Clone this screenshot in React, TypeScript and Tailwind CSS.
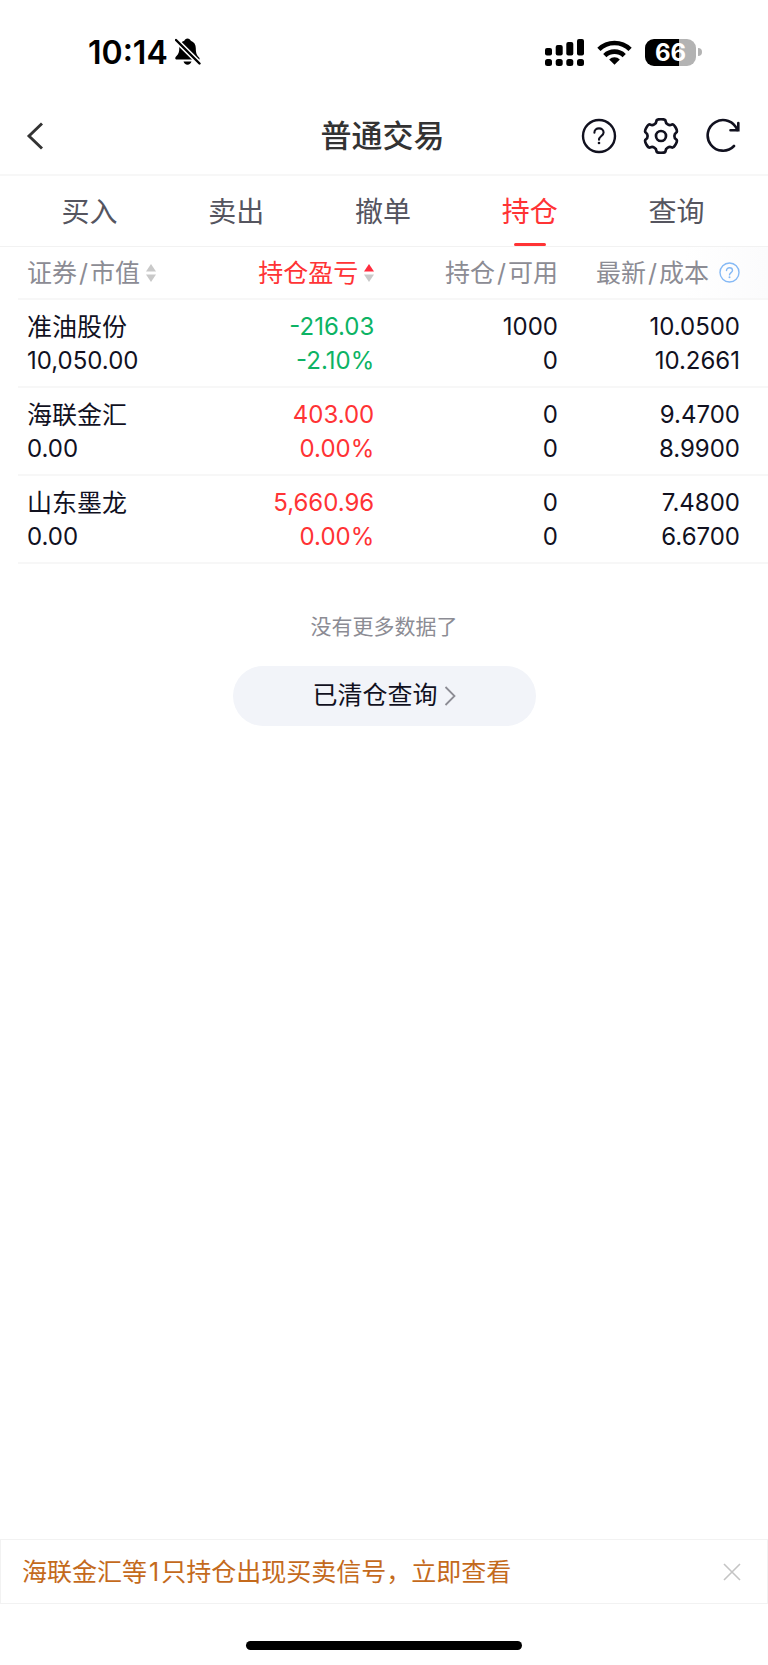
import { useState } from "react";

type Holding = {
  name: string;
  marketValue: string;
  profit: string;
  profitRate: string;
  amount: string;
  available: string;
  price: string;
  cost: string;
};

const tabs = ["买入", "卖出", "撤单", "持仓", "查询"];

const holdings: Holding[] = [
  { name: "准油股份", marketValue: "10,050.00", profit: "-216.03", profitRate: "-2.10%", amount: "1000", available: "0", price: "10.0500", cost: "10.2661" },
  { name: "海联金汇", marketValue: "0.00", profit: "403.00", profitRate: "0.00%", amount: "0", available: "0", price: "9.4700", cost: "8.9900" },
  { name: "山东墨龙", marketValue: "0.00", profit: "5,660.96", profitRate: "0.00%", amount: "0", available: "0", price: "7.4800", cost: "6.6700" },
];

// six rounded teeth, corners smoothed by running quadratics through the midpoints
function buildGearPath(cx: number, cy: number) {
  const corners: number[][] = [];
  for (let tooth = 0; tooth < 6; tooth++) {
    for (const [offset, radius] of [[-15, 17.5], [15, 17.5], [20, 13.6], [40, 13.6]]) {
      const angle = ((tooth * 60 + offset) * Math.PI) / 180;
      corners.push([cx + radius * Math.sin(angle), cy - radius * Math.cos(angle)]);
    }
  }
  const mid = (a: number[], b: number[]) => `${((a[0] + b[0]) / 2).toFixed(2)} ${((a[1] + b[1]) / 2).toFixed(2)}`;
  const start = `M${mid(corners[corners.length - 1], corners[0])}`;
  return corners.reduce((path, corner, i) => {
    const next = corners[(i + 1) % corners.length];
    return `${path}Q${corner[0].toFixed(2)} ${corner[1].toFixed(2)} ${mid(corner, next)}`;
  }, start) + "Z";
}

const gearPath = buildGearPath(18, 18);

function StatusBar() {
  return (
    <div className="flex h-24 items-center justify-between pt-2 pr-[66px] pl-[88px] text-black">
      <div className="flex items-center gap-[7px]">
        <span className="pt-0.5 text-[32px] leading-8 font-semibold">10:14</span>
        <svg width="26" height="28" viewBox="0 0 26 28" fill="currentColor">
          <path d="M12.5 0.5c1.6 0 2.9 1 3.3 2.3 3.3 1.1 5 4 5 7.5 0 5 1 7 3 9 .8.9.9 1.4.9 2.2H1.2c-.7 0-.9-.7-.9-1.2 0-1 .6-1.6 1.2-2.2 2-2 2.8-4 2.8-8 0-3.5 1.7-6.3 5-7.3C9.700 1.500 10.900.5 12.500.5z" />
          <path d="M8.5 23.5h8c-.5 1.9-2.1 3.2-4 3.2s-3.5-1.3-4-3.2z" />
          <path d="M0 1L26 27" stroke="#fff" strokeWidth="5.2" />
          <path d="M1 2L24.5 25.5" stroke="currentColor" strokeWidth="2.4" strokeLinecap="round" />
        </svg>
      </div>
      <div className="flex items-center gap-[13px]">
        <svg width="39" height="27" viewBox="0 0 39 27" fill="currentColor">
          <rect x="0" y="9" width="7" height="7.5" rx="2" />
          <rect x="10.7" y="6" width="7" height="10.5" rx="2" />
          <rect x="21.3" y="3" width="7" height="13.5" rx="2" />
          <rect x="32" y="0" width="7" height="16.5" rx="2" />
          <rect x="0" y="20" width="7" height="7" rx="2.5" />
          <rect x="10.7" y="20" width="7" height="7" rx="2.5" />
          <rect x="21.3" y="20" width="7" height="7" rx="2.5" />
          <rect x="32" y="20" width="7" height="7" rx="2.5" />
        </svg>
        <svg width="35" height="25" viewBox="0 0 35 25" fill="none" stroke="currentColor" strokeWidth="4.6">
          <path d="M1.9 9.4a22.3 22.3 0 0 1 31.2 0" />
          <path d="M7.8 15.6a13.8 13.8 0 0 1 19.4 0" />
          <path d="M17.5 24.8l-5.3-5.3a7.5 7.5 0 0 1 10.6 0z" fill="currentColor" stroke="none" />
        </svg>
        <div className="flex items-center gap-0.5">
          <div className="flex h-[27px] w-[51px] items-center justify-center rounded-[9px] bg-linear-to-r from-black from-66% to-[#b3b3b3] to-66% pt-0.5 text-2xl leading-none font-bold text-white">
            66
          </div>
          <div className="h-2 w-1 rounded-r-full bg-[#b3b3b3]" />
        </div>
      </div>
    </div>
  );
}

function Header() {
  return (
    <header className="grid h-20 grid-cols-[1fr_auto_1fr] items-center border-b-2 border-[#f7f7f7] pt-0.5 pr-[27px] pl-6">
      <button type="button" aria-label="返回" className="justify-self-start">
        <svg width="22" height="32" viewBox="0 0 22 32" fill="none" stroke="#333" strokeWidth="2.9">
          <path d="M18 3.5L5 16l13 12.5" />
        </svg>
      </button>
      <h1 className="text-[31px] leading-10 font-medium text-[#333]">普通交易</h1>
      <div className="flex gap-[26px] justify-self-end text-[#11111f]">
        <button type="button" aria-label="帮助">
          <svg width="36" height="36" viewBox="0 0 36 36" fill="none" stroke="currentColor" strokeWidth="2.4" strokeLinecap="round">
            <circle cx="18" cy="18" r="16" />
            <path d="M13.4 14.7c0-2.6 2-4.3 4.6-4.3s4.6 1.7 4.6 4.1c0 3.2-4.6 3.8-4.6 7.2" strokeWidth="2.1" />
            <circle cx="18" cy="25" r="1.3" fill="currentColor" stroke="none" />
          </svg>
        </button>
        <button type="button" aria-label="设置">
          <svg width="36" height="36" viewBox="0 0 36 36" fill="none" stroke="currentColor" strokeWidth="2.7">
            <path d={gearPath} />
            <circle cx="18" cy="18" r="5" />
          </svg>
        </button>
        <button type="button" aria-label="刷新">
          <svg width="36" height="36" viewBox="0 0 36 36" fill="none" stroke="currentColor" strokeWidth="2.6" strokeLinecap="round">
            <path d="M32.3 12A15.3 15.3 0 1 0 29 28" />
            <path d="M33.3 5v7.3H25.5" />
          </svg>
        </button>
      </div>
    </header>
  );
}

function SortArrows({ active }: { active?: boolean }) {
  return (
    <svg width="10" height="18" viewBox="0 0 10 18">
      <path d="M5 0l5 7.5H0z" fill={active ? "#ff2d3f" : "#c9c9c9"} />
      <path d="M5 18l5-7.5H0z" fill="#c9c9c9" />
    </svg>
  );
}

function Slash() {
  return <span className="mx-0.5">/</span>;
}

function HoldingsTable() {
  return (
    <div className="pl-[18px]">
      <table className="w-full table-fixed border-collapse text-right text-2xl leading-[34px] text-[#11111f]">
        <colgroup>
          <col className="w-[23%]" />
          <col className="w-[24.5%]" />
          <col className="w-[24.5%]" />
          <col className="w-[28%]" />
        </colgroup>
        <thead>
          <tr className="h-[52px] border-b-2 border-[#f7f7f7] text-[25px] text-[#8c8c94]">
            <th className="p-0 pl-[9px] text-left font-normal">
              <button type="button" className="flex items-center gap-1.5 whitespace-nowrap">
                <span>证券<Slash />市值</span>
                <SortArrows />
              </button>
            </th>
            <th className="p-0 font-normal">
              <button type="button" className="ml-auto flex items-center gap-1.5 whitespace-nowrap text-[#ff3335]">
                持仓盈亏
                <SortArrows active />
              </button>
            </th>
            <th className="p-0 font-normal whitespace-nowrap">持仓<Slash />可用</th>
            <th className="bg-linear-to-r from-white from-60% to-[#fbfbfc] p-0 pr-7 font-normal">
              <div className="flex items-center justify-end gap-2.5 whitespace-nowrap">
                <span>最新<Slash />成本</span>
                <button type="button" aria-label="成本说明">
                  <svg width="21" height="21" viewBox="0 0 21 21" fill="none" stroke="#85b9f5" strokeWidth="1.4" strokeLinecap="round">
                    <circle cx="10.5" cy="10.5" r="9.5" />
                    <path d="M7.5 8.6c0-1.7 1.3-2.9 3-2.9s3 1.1 3 2.7c0 2-3 2.4-3 4.5" />
                    <circle cx="10.5" cy="15.2" r="1" fill="#85b9f5" stroke="none" />
                  </svg>
                </button>
              </div>
            </th>
          </tr>
        </thead>
        <tbody>
          {holdings.map((item) => (
            <tr key={item.name} className="h-[88px] border-b-2 border-[#f7f7f7]">
              <td className="p-0 pt-0.5 pl-[9px] text-left">
                <div className="text-[25px]">{item.name}</div>
                <div>{item.marketValue}</div>
              </td>
              <td className={item.profit.startsWith("-") ? "p-0 pt-0.5 text-[#0cb364]" : "p-0 pt-0.5 text-[#ff3335]"}>
                <div>{item.profit}</div>
                <div>{item.profitRate}</div>
              </td>
              <td className="p-0 pt-0.5">
                <div>{item.amount}</div>
                <div>{item.available}</div>
              </td>
              <td className="p-0 pt-0.5 pr-7">
                <div>{item.price}</div>
                <div>{item.cost}</div>
              </td>
            </tr>
          ))}
        </tbody>
      </table>
    </div>
  );
}

export default function App() {
  const [activeTab, setActiveTab] = useState("持仓");
  const [showSignal, setShowSignal] = useState(true);

  return (
    <div className="flex min-h-screen flex-col bg-white font-['Inter','Noto_Sans_CJK_SC',sans-serif]">
      <StatusBar />
      <Header />
      <nav className="flex h-[71px] border-b border-[#f2f2f2] pr-[18px] pl-4">
        {tabs.map((tab) => (
          <button
            key={tab}
            type="button"
            onClick={() => setActiveTab(tab)}
            className={`relative flex-1 pt-0.5 text-[28px] ${tab === activeTab ? "text-[#ff3335]" : "text-[#55555f]"}`}
          >
            {tab}
            {tab === activeTab && <span className="absolute inset-x-0 bottom-0 mx-auto h-[3px] w-8 rounded-full bg-[#ff3335]" />}
          </button>
        ))}
      </nav>
      <HoldingsTable />
      <div className="flex flex-col items-center pt-[47px]">
        <p className="text-[21px] leading-8 text-[#8c8c94]">没有更多数据了</p>
        <button
          type="button"
          className="mt-[23px] flex h-[60px] w-[303px] items-center justify-center gap-1.5 rounded-full bg-[#f2f4f9] text-[25px] text-[#11111f]"
        >
          已清仓查询
          <svg width="12" height="20" viewBox="0 0 12 20" fill="none" stroke="#8c8c94" strokeWidth="1.8">
            <path d="M1.5 1l9 9-9 9" />
          </svg>
        </button>
      </div>
      <footer className="mt-auto">
        {showSignal && (
          <div className="flex h-[65px] items-center justify-between border border-[#f2f2f2] pr-[26px] pl-[21px]">
            <a href="#signals" className="pt-0.5 text-[25px] text-[#c46a1c]">
              海联金汇等<span className="mx-0.5">1</span>只持仓出现买卖信号，立即查看
            </a>
            <button type="button" aria-label="关闭" onClick={() => setShowSignal(false)}>
              <svg width="18" height="18" viewBox="0 0 18 18" fill="none" stroke="#c4c4c4" strokeWidth="1.6">
                <path d="M1 1l16 16M17 1L1 17" />
              </svg>
            </button>
          </div>
        )}
        <div className="pt-[37px] pb-[15px]">
          <div className="mx-auto h-[9px] w-[36%] rounded-full bg-black" />
        </div>
      </footer>
    </div>
  );
}
